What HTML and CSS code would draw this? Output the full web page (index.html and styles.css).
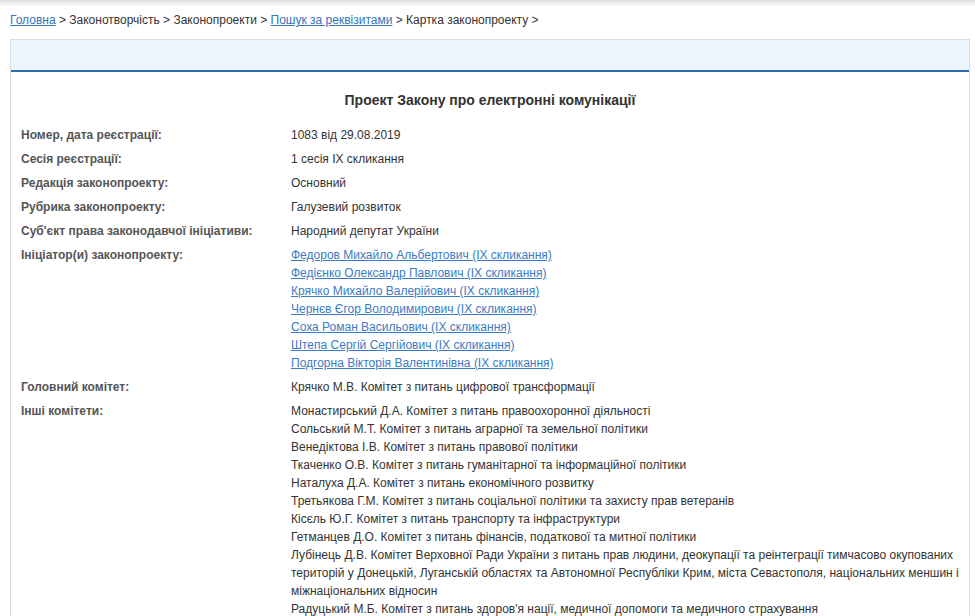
FILE: index.html
```html
<!DOCTYPE html>
<html lang="uk">
<head>
<meta charset="utf-8">
<title>Картка законопроекту</title>
<link rel="stylesheet" href="styles.css">
</head>
<body>
<div class="topshadow"></div>
<div class="page">
  <div class="crumbs">
    <a href="#">Головна</a> &gt; Законотворчість &gt; Законопроекти &gt; <a href="#">Пошук за реквізитами</a> &gt; Картка законопроекту &gt;
  </div>
  <div class="panel">
    <div class="panel-head"></div>
    <div class="panel-body">
      <h1 class="title">Проект Закону про електронні комунікації</h1>
      <div class="info">
        <div class="lbl">Номер, дата реєстрації:</div>
        <div class="val">1083 від 29.08.2019</div>

        <div class="lbl">Сесія реєстрації:</div>
        <div class="val">1 сесія IX скликання</div>

        <div class="lbl">Редакція законопроекту:</div>
        <div class="val">Основний</div>

        <div class="lbl">Рубрика законопроекту:</div>
        <div class="val">Галузевий розвиток</div>

        <div class="lbl">Суб'єкт права законодавчої ініціативи:</div>
        <div class="val">Народний депутат України</div>

        <div class="lbl">Ініціатор(и) законопроекту:</div>
        <div class="val">
          <div><a href="#">Федоров Михайло Альбертович (IX скликання)</a></div>
          <div><a href="#">Федієнко Олександр Павлович (IX скликання)</a></div>
          <div><a href="#">Крячко Михайло Валерійович (IX скликання)</a></div>
          <div><a href="#">Чернєв Єгор Володимирович (IX скликання)</a></div>
          <div><a href="#">Соха Роман Васильович (IX скликання)</a></div>
          <div><a href="#">Штепа Сергій Сергійович (IX скликання)</a></div>
          <div><a href="#">Подгорна Вікторія Валентинівна (IX скликання)</a></div>
        </div>

        <div class="lbl">Головний комітет:</div>
        <div class="val">Крячко М.В. Комітет з питань цифрової трансформації</div>

        <div class="lbl">Інші комітети:</div>
        <div class="val">
          <div>Монастирський Д.А. Комітет з питань правоохоронної діяльності</div>
          <div>Сольський М.Т. Комітет з питань аграрної та земельної політики</div>
          <div>Венедіктова І.В. Комітет з питань правової політики</div>
          <div>Ткаченко О.В. Комітет з питань гуманітарної та інформаційної політики</div>
          <div>Наталуха Д.А. Комітет з питань економічного розвитку</div>
          <div>Третьякова Г.М. Комітет з питань соціальної політики та захисту прав ветеранів</div>
          <div>Кісєль Ю.Г. Комітет з питань транспорту та інфраструктури</div>
          <div>Гетманцев Д.О. Комітет з питань фінансів, податкової та митної політики</div>
          <div>Лубінець Д.В. Комітет Верховної Ради України з питань прав людини, деокупації та реінтеграції тимчасово окупованих територій у Донецькій, Луганській областях та Автономної Республіки Крим, міста Севастополя, національних меншин і міжнаціональних відносин</div>
          <div>Радуцький М.Б. Комітет з питань здоров'я нації, медичної допомоги та медичного страхування</div>
        </div>
      </div>
    </div>
  </div>
</div>
</body>
</html>
```

FILE: styles.css
```css
html, body {
  margin: 0;
  padding: 0;
  background: #fff;
}
body {
  font-family: "Liberation Sans", Arial, sans-serif;
  font-size: 12px;
  line-height: 18px;
  color: #333;
  overflow: hidden;
}
.topshadow {
  height: 7px;
  background: linear-gradient(to bottom, #dcdcdc 0%, #eeeeee 45%, #ffffff 100%);
}
.page {
  width: 960px;
  margin-left: 10px;
}
.crumbs {
  padding-top: 4px;
  color: #333;
  height: 18px;
}
.crumbs a {
  color: #3573bb;
  text-decoration: underline;
}
.panel {
  margin-top: 10px;
  border: 1px solid #dcdcdc;
  border-bottom: none;
}
.panel-head {
  height: 30px;
  background: #eaf5fe;
  border-bottom: 2px solid #2b70ac;
}
.panel-body {
  padding: 19px 10px 0 10px;
}
.title {
  margin: 0 0 17px 0;
  text-align: center;
  font-size: 14px;
  line-height: 18px;
  font-weight: bold;
  color: #333;
}
.info {
  display: grid;
  grid-template-columns: 270px 1fr;
  row-gap: 6px;
}
.lbl {
  font-weight: bold;
  color: #555;
}
.val a {
  color: #3a7bc4;
  text-decoration: underline;
}
```
